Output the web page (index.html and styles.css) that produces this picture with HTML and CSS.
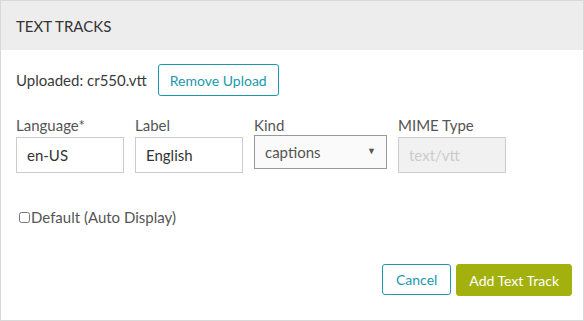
FILE: index.html
```html
<!DOCTYPE html>
<html lang="en">
<head>
    <meta charset="UTF-8">
    <title>Text Tracks</title>
    <link rel="stylesheet" href="styles.css">
</head>
<body>
    <div class="panel">
        <div class="panel-header">
            <h3>Text Tracks</h3>
        </div>
        <div class="panel-body">
            <div class="upload-row">
                <span class="upload-name">Uploaded: cr550.vtt</span>
                <button class="btn btn-outline">Remove Upload</button>
            </div>

            <div class="field-row">
                <div class="field">
                    <label>Language*</label>
                    <input type="text" class="text-input" value="en-US">
                </div>
                <div class="field">
                    <label>Label</label>
                    <input type="text" class="text-input" value="English">
                </div>
                <div class="field field-kind">
                    <label>Kind</label>
                    <div class="select-box">
                        <span>captions</span>
                        <span class="caret">&#9660;</span>
                    </div>
                </div>
                <div class="field">
                    <label>MIME Type</label>
                    <input type="text" class="text-input" placeholder="text/vtt" disabled>
                </div>
            </div>

            <label class="check-row">
                <input type="checkbox">Default (Auto Display)
            </label>

            <div class="panel-footer">
                <button class="btn btn-outline btn-cancel">Cancel</button>
                <button class="btn btn-primary">Add Text Track</button>
            </div>
        </div>
    </div>
</body>
</html>
```

FILE: styles.css
```css
/* Base styles */
* {
    margin: 0;
    padding: 0;
    box-sizing: border-box;
}

body {
    font-family: Lato, 'Open Sans', sans-serif;
    color: #333;
    background-color: #fff;
}

/* Panel */
.panel {
    width: 584px;
    height: 321px;
    border: 1px solid #d9d9d9;
    display: flex;
    flex-direction: column;
}

.panel-header {
    height: 49px;
    background-color: #ededed;
    padding-left: 15px;
    display: flex;
    align-items: center;
}

.panel-header h3 {
    font-size: 15px;
    font-weight: 400;
    text-transform: uppercase;
    color: #333;
}

.panel-body {
    flex: 1;
    padding: 14px 11px 0 15px;
    display: flex;
    flex-direction: column;
}

/* Upload row */
.upload-row {
    display: flex;
    align-items: center;
    gap: 11px;
}

.upload-name {
    font-size: 15px;
    color: #3a3a3a;
}

/* Buttons */
.btn {
    font-family: Lato, 'Open Sans', sans-serif;
    font-size: 14px;
    height: 32px;
    padding: 0 11px;
    border-radius: 3px;
    cursor: pointer;
}

.btn-outline {
    background-color: #fff;
    color: #1a98ad;
    border: 1px solid #1a98ad;
}

.btn-cancel {
    height: 31px;
    padding: 0 13px;
}

.btn-primary {
    background-color: #a3b10e;
    color: #fff;
    border: 1px solid #a3b10e;
    padding: 0 12px;
}

/* Fields */
.field-row {
    display: flex;
    gap: 11px;
    margin-top: 20px;
}

.field {
    display: flex;
    flex-direction: column;
}

.field label {
    font-size: 15px;
    color: #555;
    line-height: 19px;
    margin-bottom: 2px;
}

.text-input {
    width: 108px;
    height: 36px;
    border: 1px solid #ccc;
    padding: 0 10px;
    font-family: Lato, 'Open Sans', sans-serif;
    font-size: 15px;
    color: #333;
    background-color: #fff;
}

.text-input:disabled {
    background-color: #f1f1f1;
}

.text-input::placeholder {
    color: #ccc;
}

.field-kind label {
    margin-bottom: 0;
}

.select-box {
    width: 133px;
    height: 34px;
    border: 1px solid #999;
    padding: 0 10px;
    display: flex;
    align-items: center;
    justify-content: space-between;
    font-size: 15px;
    color: #555;
    background-color: #fafafa;
}

.caret {
    font-size: 9px;
    color: #555;
    margin-top: -3px;
}

/* Checkbox */
.check-row {
    display: flex;
    align-items: center;
    margin-top: 35px;
    font-size: 15px;
    color: #555;
}

.check-row input {
    width: 11px;
    height: 11px;
    margin: 0 1px 0 3px;
}

/* Footer */
.panel-footer {
    display: flex;
    justify-content: flex-end;
    align-items: flex-start;
    gap: 5px;
    margin-top: 38px;
}
```
